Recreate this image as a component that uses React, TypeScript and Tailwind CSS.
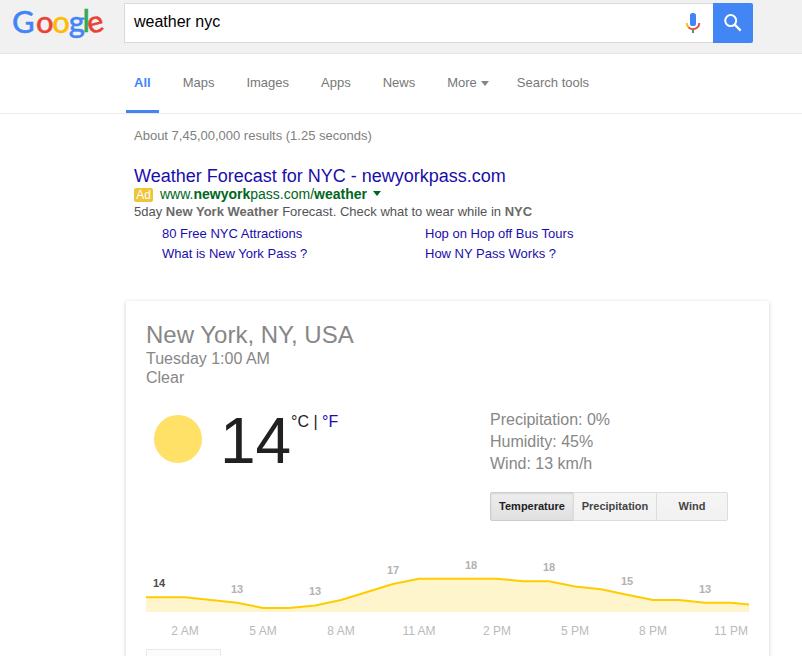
import { useState } from "react"

const tabs = ["All", "Maps", "Images", "Apps", "News"]

const sitelinks = [
  "80 Free NYC Attractions",
  "Hop on Hop off Bus Tours",
  "What is New York Pass ?",
  "How NY Pass Works ?",
]

const metrics = [
  { name: "Temperature", width: "w-[84px]" },
  { name: "Precipitation", width: "w-[84px]" },
  { name: "Wind", width: "w-[72px]" },
]

// chart coordinates, origin at the top left of the chart
const line: [number, number][] = [
  [0, 47.2], [39, 47.2], [65, 50], [91, 52.8], [117, 58], [143, 58],
  [169, 55.4], [195, 50], [221, 42], [247, 34], [273, 28.7], [351, 28.7],
  [377, 31.3], [403, 31.3], [429, 36.6], [455, 39.3], [481, 44.7],
  [507, 50], [533, 50], [559, 52.7], [585, 52.7], [603, 54.6],
]

const temps = [
  { x: 13, y: 37, value: 14 },
  { x: 91, y: 43, value: 13 },
  { x: 169, y: 45, value: 13 },
  { x: 247, y: 24, value: 17 },
  { x: 325, y: 19, value: 18 },
  { x: 403, y: 21, value: 18 },
  { x: 481, y: 35, value: 15 },
  { x: 559, y: 43, value: 13 },
]

const hours = ["2 AM", "5 AM", "8 AM", "11 AM", "2 PM", "5 PM", "8 PM", "11 PM"]

function Logo() {
  return (
    <svg
      width="98"
      height="50"
      viewBox="0 0 98 50"
      className="mt-px ml-[11px] shrink-0 overflow-visible font-[Lato,sans-serif] text-[31px] font-medium"
      aria-label="Google"
    >
      <g strokeWidth="0.4">
        <text x="1" y="31.5" fill="#4285f4" stroke="#4285f4">G</text>
        <text x="24.9" y="31.5" fill="#ea4335" stroke="#ea4335">o</text>
        <text x="41.2" y="31.5" fill="#fbbc05" stroke="#fbbc05">o</text>
        <text x="57.8" y="31.5" fill="#4285f4" stroke="#4285f4">g</text>
        <text x="71.4" y="31" fill="#34a853" stroke="#34a853">l</text>
        <text
          x="76.3"
          y="31.5"
          fill="#ea4335"
          stroke="#ea4335"
          transform="rotate(-14 84.5 23.5)"
        >
          e
        </text>
      </g>
    </svg>
  )
}

function MicIcon() {
  return (
    <svg width="16" height="22" viewBox="0 0 16 22" fill="none">
      <rect x="5" y="1" width="6" height="13" rx="2.6" fill="#4285f4" />
      <path d="M1.7 11c0 1.9.8 3.4 2 4.5" stroke="#fbbc05" strokeWidth="1.8" />
      <path d="M3.5 15.3C4.7 16.5 6.2 17.1 8 17.1c3.6 0 6.3-2.6 6.3-6.1" stroke="#ea4335" strokeWidth="1.8" />
      <path d="M8 18v3" stroke="#34a853" strokeWidth="2" />
    </svg>
  )
}

function SearchIcon() {
  return (
    <svg width="20" height="20" viewBox="0 0 20 20" fill="none" stroke="#fff">
      <circle cx="7.7" cy="7.6" r="5.5" strokeWidth="2" />
      <path d="M11.7 11.6l6 6" strokeWidth="2.3" />
    </svg>
  )
}

function Header() {
  return (
    <header className="flex h-[54px] items-start border-b border-[#e5e5e5] bg-[#f1f1f1]">
      <Logo />
      <div className="ml-[15px] mt-[3px] flex h-10 w-[629px] shrink-0">
        <div className="flex flex-1 items-center justify-between border border-r-0 border-[#d9d9d9] bg-white pl-[9px] pr-3">
          <span className="pb-[2px] text-base text-black">weather nyc</span>
          <MicIcon />
        </div>
        <button className="flex w-10 items-center justify-center rounded-r-xs bg-[#4285f4]">
          <SearchIcon />
        </button>
      </div>
    </header>
  )
}

function Nav() {
  return (
    <nav className="flex h-[60px] gap-4 border-b border-[#ebebeb] pl-[126px] text-[13px] leading-[58px] text-[#777]">
      {tabs.map((tab) => (
        <a
          key={tab}
          className={
            tab === "All"
              ? "h-[59px] border-b-3 border-[#4285f4] px-2 font-bold text-[#4285f4]"
              : "px-2"
          }
        >
          {tab}
        </a>
      ))}
      <a className="flex h-[58px] items-center gap-1 pl-2 pr-1">
        More
        <span className="border-x-4 border-t-[5px] border-x-transparent border-t-[#858585]" />
      </a>
      <a className="px-2">Search tools</a>
    </nav>
  )
}

function Ad() {
  return (
    <section className="pl-[134px]">
      <h3 className="pt-px text-lg leading-5 text-[#1a0dab]">
        Weather Forecast for NYC - newyorkpass.com
      </h3>
      <div className="flex h-4 items-center text-sm text-[#006621]">
        <span className="mr-[7px] mt-[2px] h-[14px] w-[19px] rounded-xs bg-[#efc439] text-center text-xs leading-[14px] text-white">
          Ad
        </span>
        <span>
          www.<b>newyork</b>pass.com/<b>weather</b>
        </span>
        <span className="-mt-px ml-[6px] border-x-4 border-t-[5px] border-x-transparent border-t-[#006621]" />
      </div>
      <p className="mt-[1px] text-[13px] leading-[18px] text-[#545454]">
        5day <b className="text-[#6a6a6a]">New York Weather</b> Forecast. Check what to wear while in{" "}
        <b className="text-[#6a6a6a]">NYC</b>
      </p>
      <div className="mt-[3px] grid grid-cols-[263px_263px] pl-7 text-[13px] leading-5 text-[#1a0dab]">
        {sitelinks.map((link) => (
          <a key={link}>{link}</a>
        ))}
      </div>
    </section>
  )
}

function TemperatureChart() {
  const points = line.map((p) => p.join(",")).join(" ")
  return (
    <svg width="603" height="90" viewBox="0 0 603 90" className="mt-[29px] block">
      <polygon points={`0,62 ${points} 603,62`} fill="#fff5cc" />
      <polyline points={points} fill="none" stroke="#fc0" strokeWidth="2" />
      <g textAnchor="middle" className="text-[11px] font-bold">
        {temps.map((t, i) => (
          <text key={t.x} x={t.x} y={t.y} fill={i === 0 ? "#4c4c4c" : "#b2b2b2"}>
            {t.value}
          </text>
        ))}
      </g>
      <g textAnchor="middle" fill="#bababa" className="text-xs">
        {hours.map((h, i) => (
          <text key={h} x={39 + i * 78} y="85">
            {h}
          </text>
        ))}
      </g>
    </svg>
  )
}

function WeatherCard() {
  const [metric, setMetric] = useState("Temperature")

  return (
    <section className="ml-[126px] mt-[37px] h-[400px] w-[643px] rounded-xs bg-white px-5 pt-5 text-[#878787] shadow-[0_1px_4px_rgba(0,0,0,0.2)]">
      <h2 className="text-2xl leading-7">New York, NY, USA</h2>
      <div className="text-base leading-[19px]">Tuesday 1:00 AM</div>
      <div className="text-base leading-[19px]">Clear</div>

      <div className="mt-[22px] flex h-[112px]">
        <div className="ml-2 mt-[6px] size-12 shrink-0 rounded-full bg-[#ffe168]" />
        <div className="ml-[18px] w-[71px] text-[64px] leading-[64px] text-[#212121]">14</div>
        <div className="mt-[3px] w-[199px] text-base leading-5 text-[#212121]">
          °C | <a className="text-[#1a0dab]">°F</a>
        </div>
        <div>
          <div className="text-base leading-[22px]">
            <div>Precipitation: 0%</div>
            <div>Humidity: 45%</div>
            <div>Wind: 13 km/h</div>
          </div>
          <div className="mt-[17px] flex text-[11px] font-bold">
            {metrics.map(({ name, width }) => (
              <button
                key={name}
                onClick={() => setMetric(name)}
                className={`${width} -mr-px h-[29px] border first:rounded-l-xs last:rounded-r-xs ${
                  name === metric
                    ? "border-[#ccc] bg-linear-to-b from-[#eee] to-[#e0e0e0] text-[#222] shadow-[inset_0_1px_2px_rgba(0,0,0,0.1)]"
                    : "border-[#dcdcdc] bg-linear-to-b from-[#f5f5f5] to-[#f1f1f1] text-[#444]"
                }`}
              >
                {name}
              </button>
            ))}
          </div>
        </div>
      </div>

      <TemperatureChart />
      <div className="mt-[9px] h-24 w-[75px] border border-[#e9e9e9] bg-[#fcfcfc]" />
    </section>
  )
}

export default function App() {
  return (
    <div className="h-[656px] w-[802px] overflow-hidden bg-white font-['Liberation_Sans',Arial,sans-serif]">
      <Header />
      <Nav />
      <div className="mb-5 mt-[13px] pl-[134px] text-[13px] leading-[18px] text-[#808080]">
        About 7,45,00,000 results (1.25 seconds)
      </div>
      <Ad />
      <WeatherCard />
    </div>
  )
}
